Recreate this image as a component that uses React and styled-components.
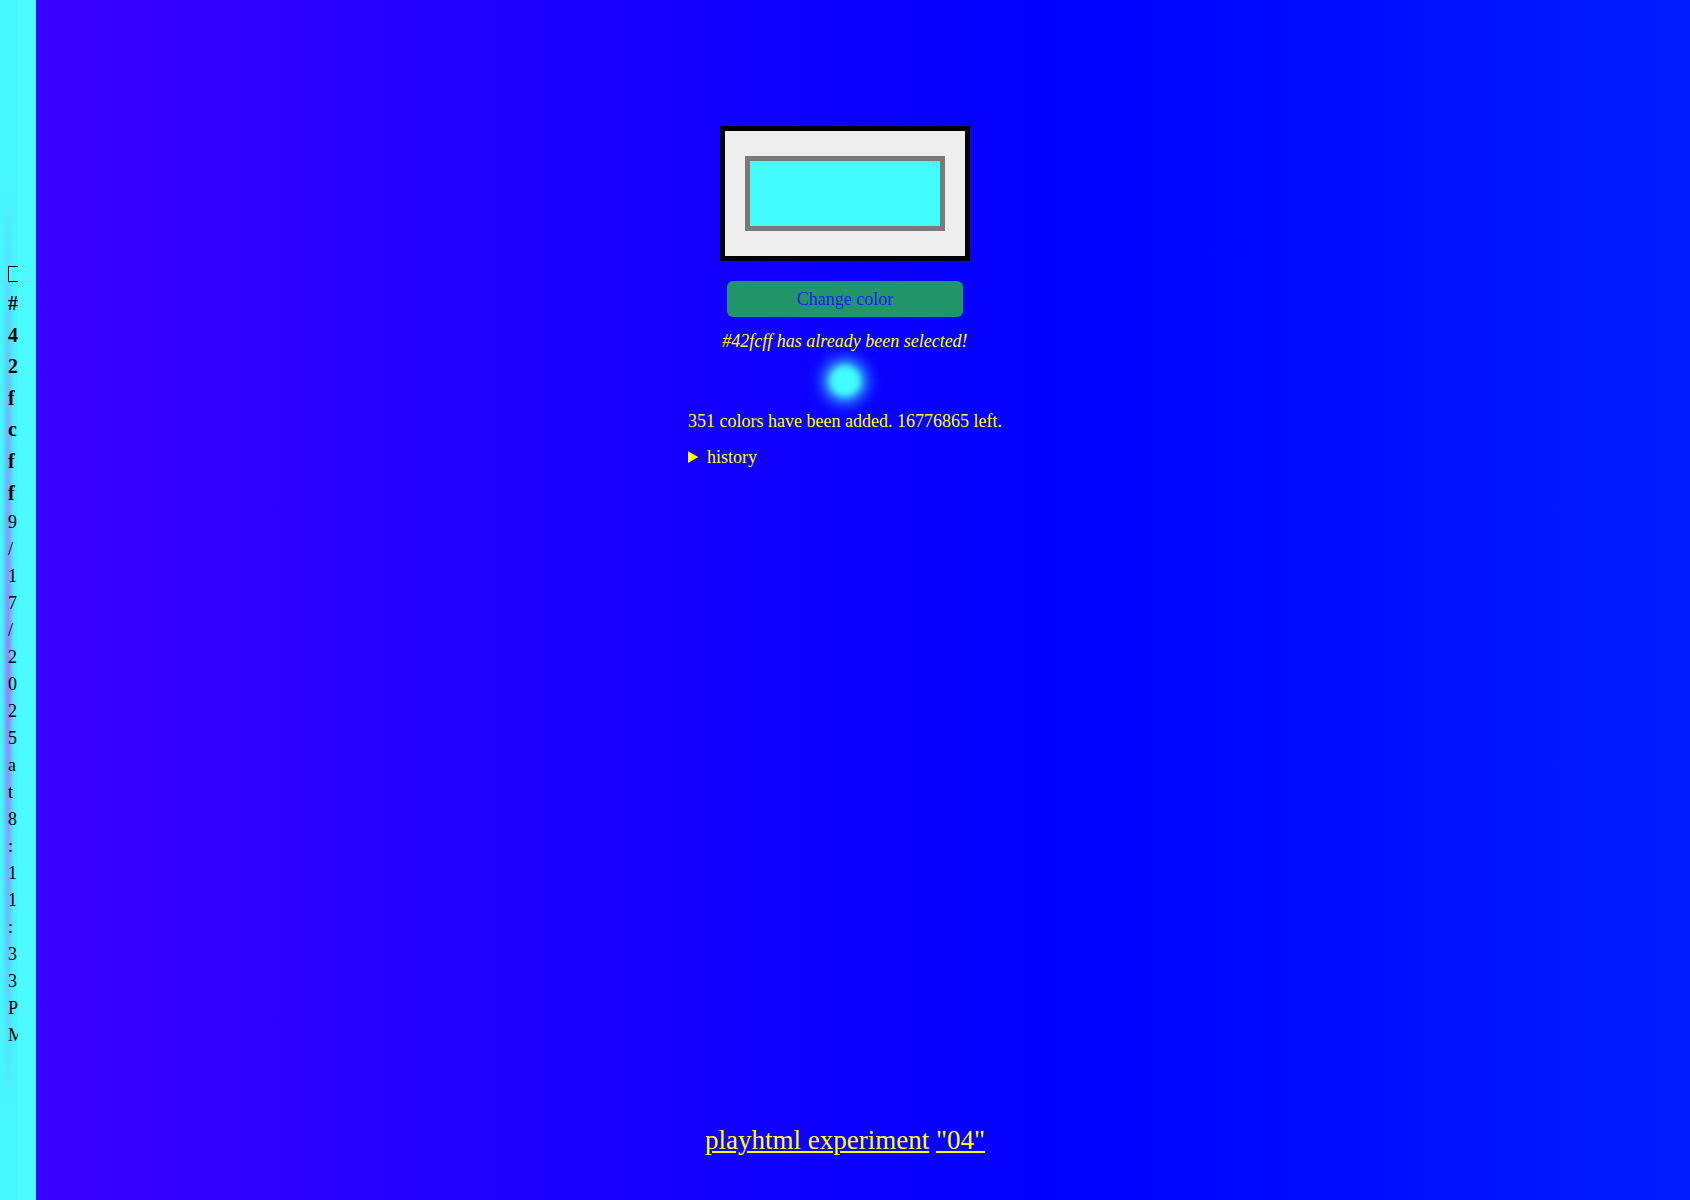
import React from "react";
import styled, { createGlobalStyle } from "styled-components";

const GlobalStyle = createGlobalStyle`
    html, body {
        margin: 0;
        padding: 0;
    }
    body {
        font-family: "Liberation Serif", "Times New Roman", serif;
        background: linear-gradient(to right, #3c00ff 0%, #0000ff 62%, #001cff 100%);
        min-height: 100vh;
    }
`

const Page = styled.main`
    min-height: 100vh;
    display: flex;
    flex-direction: column;
    align-items: center;
    box-sizing: border-box;
    padding: 126px 0 45px;
    color: #ffff00;
`

const Frame = styled.div`
    width: 250px;
    height: 135px;
    box-sizing: border-box;
    border: 5px solid #000;
    background: #eeeeee;
    padding: 25px 20px;
`

const Swatch = styled.div`
    width: 200px;
    height: 75px;
    box-sizing: border-box;
    border: 5px solid #7a7a7a;
    background: ${props => props.color};
`

const ChangeButton = styled.button`
    margin-top: 20px;
    width: 236px;
    height: 36px;
    border: none;
    border-radius: 6px;
    background: #23956a;
    color: #1c1cf0;
    font-family: inherit;
    font-size: 18px;
    cursor: pointer;
`

const Notice = styled.p`
    margin: 14px 0 0;
    font-style: italic;
    font-size: 18px;
    line-height: 21px;
`

const Glow = styled.div`
    margin-top: 13px;
    width: 32px;
    height: 32px;
    border-radius: 50%;
    background: ${props => props.color};
    filter: blur(3px);
    box-shadow: 0 0 14px 6px rgba(66, 252, 255, 0.75);
`

const Stats = styled.div`
    margin-top: 14px;
    width: fit-content;
`

const Count = styled.p`
    margin: 0;
    font-size: 18px;
    line-height: 21px;
    text-align: center;
`

const History = styled.details`
    margin-top: 15px;
    font-size: 18px;
    line-height: 21px;

    summary {
        cursor: pointer;
    }
`

const Footer = styled.footer`
    margin-top: auto;
    font-size: 27px;
    line-height: 30px;

    a {
        color: #ffff00;
    }
`

const Sidebar = styled.aside`
    position: fixed;
    top: 0;
    left: 0;
    bottom: 0;
    width: 36px;
    display: flex;
    background: linear-gradient(to right, #47f7ff 18px, #4cfbff 18px);
    overflow: hidden;
`

const Streak = styled.div`
    position: absolute;
    z-index: 0;
    left: 5px;
    top: 180px;
    width: 6px;
    height: 930px;
    background: linear-gradient(to bottom, rgba(160, 110, 255, 0) 0%, rgba(160, 110, 255, 0.7) 35%, #a070ff 55%, rgba(160, 110, 255, 0.6) 75%, rgba(160, 110, 255, 0) 100%);
    filter: blur(2px);
`

const Entry = styled.div`
    position: relative;
    z-index: 1;
    width: 18px;
    box-sizing: border-box;
    padding: 266px 0 0 8px;
    overflow: hidden;
    color: #000;
`

const EntrySwatch = styled.span`
    display: block;
    width: 16px;
    height: 16px;
    box-sizing: border-box;
    border: 1.5px solid #000;
    background: ${props => props.color};
`

const EntryText = styled.div`
    width: 1px;
    word-break: break-all;
    line-break: anywhere;
`

const EntryColor = styled(EntryText)`
    margin-top: 6px;
    font-weight: bold;
    font-size: 20px;
    line-height: 31.6px;
`

const EntryTime = styled(EntryText)`
    font-size: 18px;
    line-height: 27px;
`

const App = () => {
    const color = "#42fcff";
    return (
        <>
            <GlobalStyle />
            <Sidebar>
                <Streak />
                <Entry>
                    <EntrySwatch color={color} />
                    <EntryColor>{color}</EntryColor>
                    <EntryTime>9/17/2025 at 8:11:33 PM</EntryTime>
                </Entry>
            </Sidebar>
            <Page>
                <Frame>
                    <Swatch color={color} />
                </Frame>
                <ChangeButton>Change color</ChangeButton>
                <Notice>{color} has already been selected!</Notice>
                <Glow color={color} />
                <Stats>
                    <Count>351 colors have been added. 16776865 left.</Count>
                    <History>
                        <summary>history</summary>
                    </History>
                </Stats>
                <Footer>
                    <a href="#">playhtml experiment</a> <a href="#">"04"</a>
                </Footer>
            </Page>
        </>
    );
};

export default App;
